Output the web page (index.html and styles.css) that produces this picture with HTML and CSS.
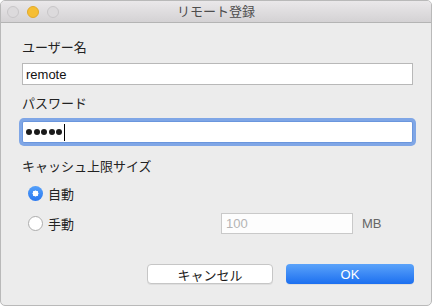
FILE: index.html
```html
<!DOCTYPE html>
<html lang="ja">
<head>
    <meta charset="UTF-8">
    <title>リモート登録</title>
    <link rel="stylesheet" href="styles.css">
</head>
<body>
    <div class="window">
        <div class="titlebar">
            <div class="lights">
                <span class="light"></span>
                <span class="light light-min"></span>
                <span class="light"></span>
            </div>
            <div class="title">リモート登録</div>
        </div>

        <div class="content">
            <div class="label">ユーザー名</div>
            <div class="field">remote</div>

            <div class="label label-pass">パスワード</div>
            <div class="field field-focus">
                <span class="dot"></span><span class="dot"></span><span class="dot"></span><span class="dot"></span><span class="dot"></span>
                <span class="caret"></span>
            </div>

            <div class="label label-cache">キャッシュ上限サイズ</div>
            <div class="option-row">
                <div class="option">
                    <span class="radio radio-on"></span>
                    <span>自動</span>
                </div>
            </div>
            <div class="option-row option-row-2">
                <div class="option">
                    <span class="radio"></span>
                    <span>手動</span>
                </div>
                <div class="size-field">100</div>
                <span class="unit">MB</span>
            </div>

            <div class="buttons">
                <div class="button">キャンセル</div>
                <div class="button button-ok">OK</div>
            </div>
        </div>
    </div>
</body>
</html>
```

FILE: styles.css
```css
body {
    margin: 0;
    background-color: #ffffff;
    font-family: 'Liberation Sans', 'Noto Sans CJK JP', sans-serif;
    font-size: 13px;
    color: #222222;
}
.window {
    width: 432px;
    height: 306px;
    box-sizing: border-box;
    border: 1px solid #b9b9b9;
    border-radius: 5px;
    overflow: hidden;
    background-color: #ececec;
}
.titlebar {
    height: 21px;
    border-bottom: 1px solid #b4b4b4;
    background: linear-gradient(#eae8ea, #d4d2d4);
    display: grid;
    grid-template-columns: 1fr auto 1fr;
    align-items: center;
}
.lights {
    display: flex;
    gap: 8px;
    padding-left: 6px;
}
.light {
    width: 10px;
    height: 10px;
    border-radius: 50%;
    background-color: #dcdadc;
    border: 1px solid #c8c6c8;
}
.light-min {
    background-color: #f6be33;
    border-color: #e2a92a;
}
.title {
    color: #4d4d4d;
    line-height: 16px;
}

.content {
    display: flex;
    flex-direction: column;
    padding: 17px 17px 0 21px;
}
.label {
    line-height: 16px;
    height: 16px;
}
.label-pass {
    margin-top: 11px;
}
.label-cache {
    margin-top: 16px;
}
.field {
    margin-top: 7px;
    width: 391px;
    height: 22px;
    box-sizing: border-box;
    border: 1px solid #b8b8b8;
    background-color: #ffffff;
    padding: 0 3px;
    display: flex;
    align-items: center;
    color: #111111;
}
.field-focus {
    margin-top: 9px;
    border-color: #6a96dd;
    border-radius: 2px;
    box-shadow: 0 0 0 3px #7fa6e6;
    gap: 1.6px;
}
.dot {
    width: 6px;
    height: 6px;
    border-radius: 50%;
    background-color: #1a1a1a;
}
.caret {
    width: 1px;
    height: 17px;
    background-color: #000000;
    margin-left: 0.5px;
}

.option-row {
    margin-top: 8px;
    height: 21px;
    display: grid;
    grid-template-columns: 199px 132px auto;
    align-items: center;
}
.option-row-2 {
    margin-top: 9px;
}
.option {
    display: flex;
    align-items: center;
    gap: 5px;
    padding-left: 6px;
}
.radio {
    width: 15px;
    height: 15px;
    box-sizing: border-box;
    border-radius: 50%;
    border: 1px solid #acacac;
    background-color: #ffffff;
}
.radio-on {
    border: none;
    background: radial-gradient(circle, #ffffff 0 2.8px, transparent 3.2px), linear-gradient(#54a0fa, #2a78f0);
}
.size-field {
    height: 21px;
    box-sizing: border-box;
    border: 1px solid #c9c9c9;
    background-color: #fdfdfd;
    color: #b4b4b4;
    padding-left: 4px;
    display: flex;
    align-items: center;
}
.unit {
    margin-left: 9px;
    color: #666666;
}

.buttons {
    margin-top: 30px;
    display: flex;
    justify-content: flex-end;
    gap: 13px;
}
.button {
    width: 126px;
    height: 20px;
    box-sizing: border-box;
    border: 1px solid #c6c6c6;
    border-radius: 4px;
    background-color: #ffffff;
    box-shadow: 0 1px 0 rgba(0, 0, 0, 0.06);
    display: flex;
    align-items: center;
    justify-content: center;
    color: #1a1a1a;
}
.button-ok {
    width: 128px;
    border: none;
    background: linear-gradient(#5ba3fa, #1c6ff0);
    color: #ffffff;
}
```
